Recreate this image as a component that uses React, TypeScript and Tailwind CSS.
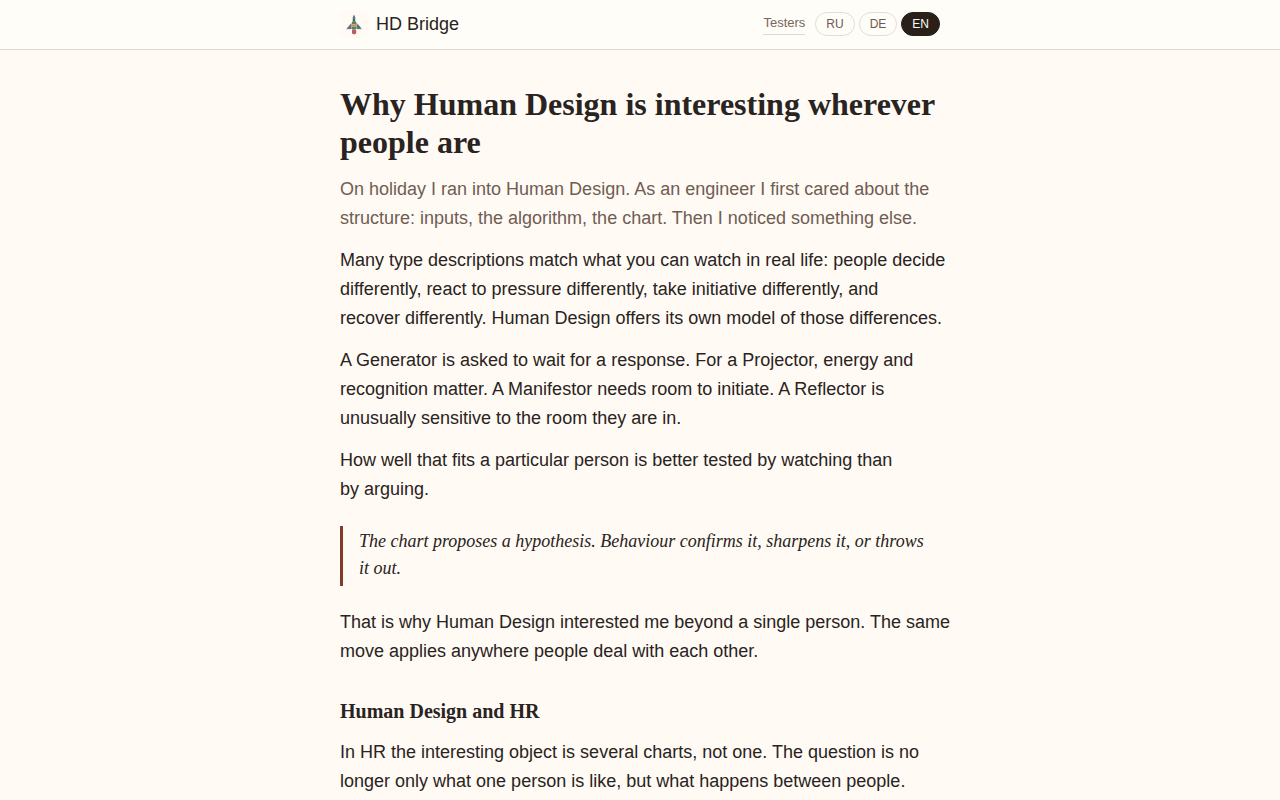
import clsx from "clsx";
import { FC, ReactNode } from "react";

const languages = ["RU", "DE", "EN"];

const Logo: FC = () => {
	return (
		<svg viewBox="0 0 28 28" className="w-7 h-7" aria-hidden="true">
			<rect width="28" height="28" rx="6" fill="#fffaf4" />
			<path d="M14 4.5l1.6 4h-3.2z" fill="#536b78" />
			<path d="M12.8 8.5h2.4v3.2h-2.4z" fill="#2f5f78" />
			<path d="M12.2 11.5h3.8l.8 2.8h-5.4z" fill="#61815c" />
			<path d="M11 14.3h6.2l.7 2.4h-7.6z" fill="#b89b58" />
			<path d="M11 13.6l-4.6 5.2 4.6-1z" fill="#7b6a80" />
			<path d="M17.2 13.6l4.6 5.2-4.6-1z" fill="#456d88" />
			<path d="M6 19.2l5-2.4.8 2.2z" fill="#4f7389" />
			<path d="M22 19.2l-5-2.4-.8 2.2z" fill="#5e7b62" />
			<path d="M11.2 16.7h5.6l-1.2 3.1h-3.2z" fill="#617b73" />
			<path d="M12 20h4.2v3.4l-2.1 1.2L12 23.4z" fill="#bd5c5e" />
		</svg>
	);
};

const Header: FC = () => {
	return (
		<header className="bg-[#fffdf7] border-b border-[#ddd8d2]">
			<div className="flex items-center justify-between w-full h-[49px] max-w-[600px] mx-auto pb-0.5">
				<a href="#" className="flex items-center gap-2 text-lg">
					<Logo />
					HD Bridge
				</a>
				<nav className="flex items-center gap-1">
					<a
						href="#testers"
						className="mr-1.5 border-b border-[#e2d8d0] text-[13px] leading-[22px] text-[#79665d]"
					>
						Testers
					</a>
					{languages.map((lang) => (
						<button
							key={lang}
							type="button"
							className={clsx(
								"px-2.5 h-6 rounded-full border text-xs",
								lang === "EN"
									? "border-[#292019] bg-[#292019] text-[#fffaf4]"
									: "border-[#e5dcd6] text-[#6d5b52]",
							)}
						>
							{lang}
						</button>
					))}
				</nav>
			</div>
		</header>
	);
};

const Paragraph: FC<{ children: ReactNode; className?: string }> = ({
	children,
	className,
}) => {
	return (
		<p className={clsx("mb-[13px] text-lg leading-[29px] sm:whitespace-nowrap", className)}>
			{children}
		</p>
	);
};

const App: FC = () => {
	return (
		<div className="min-h-screen bg-[#fffaf4] font-['Liberation_Sans',sans-serif] text-[#292321]">
			<Header />
			<main className="w-full max-w-[600px] mx-auto pt-[35px]">
				<h1 className="mb-3.5 font-['Liberation_Serif',serif] text-[32px] font-bold leading-[38px]">
					Why Human Design is interesting wherever people are
				</h1>
				<Paragraph className="text-[#6f5d53]">
					On holiday I ran into Human Design. As an engineer I first cared about the
					<br />
					structure: inputs, the algorithm, the chart. Then I noticed something else.
				</Paragraph>
				<Paragraph>
					Many type descriptions match what you can watch in real life: people decide
					<br />
					differently, react to pressure differently, take initiative differently, and
					<br />
					recover differently. Human Design offers its own model of those differences.
				</Paragraph>
				<Paragraph>
					A Generator is asked to wait for a response. For a Projector, energy and
					<br />
					recognition matter. A Manifestor needs room to initiate. A Reflector is
					<br />
					unusually sensitive to the room they are in.
				</Paragraph>
				<Paragraph>
					How well that fits a particular person is better tested by watching than
					<br />
					by arguing.
				</Paragraph>
				<blockquote className="my-[22px] border-l-3 border-[#813a28] pt-0.5 pb-1 pl-4 font-['Liberation_Serif',serif] text-lg italic leading-[27px]">
					The chart proposes a hypothesis. Behaviour confirms it, sharpens it, or throws
					<br />
					it out.
				</blockquote>
				<Paragraph>
					That is why Human Design interested me beyond a single person. The same
					<br />
					move applies anywhere people deal with each other.
				</Paragraph>
				<h2 className="mt-8 mb-3.5 font-['Liberation_Serif',serif] text-xl font-bold leading-[26px]">
					Human Design and HR
				</h2>
				<Paragraph>
					In HR the interesting object is several charts, not one. The question is no
					<br />
					longer only what one person is like, but what happens between people.
				</Paragraph>
			</main>
		</div>
	);
};

export default App;
